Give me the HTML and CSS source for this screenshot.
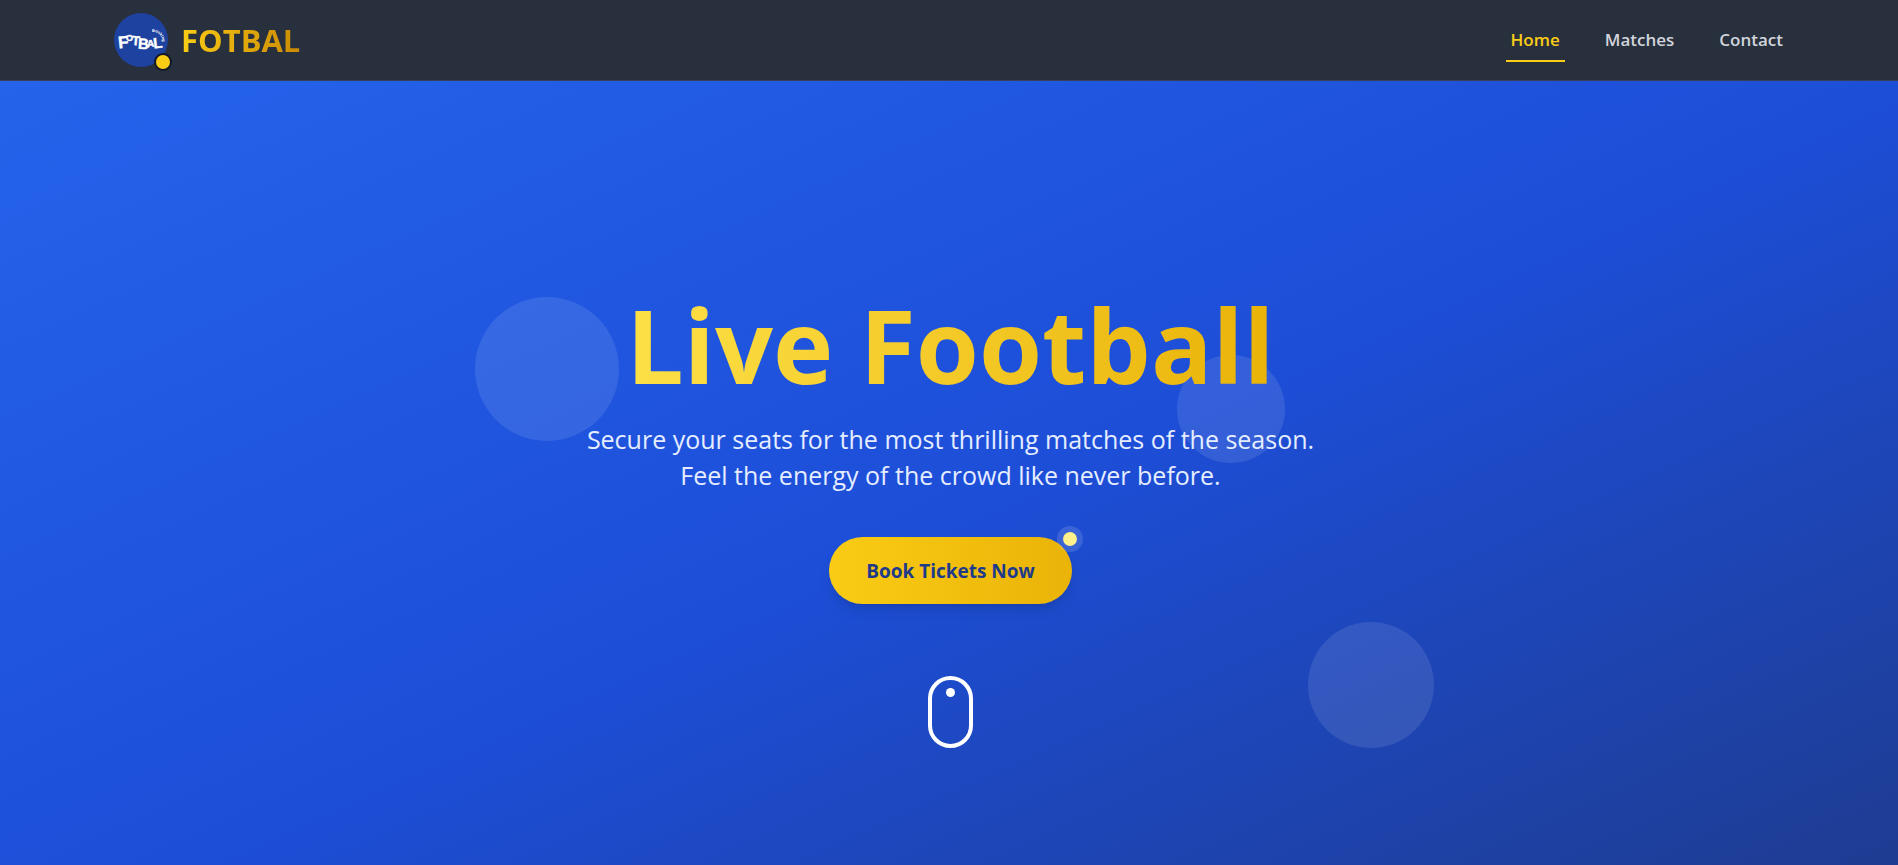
FILE: index.html
```html
<!DOCTYPE html>
<html lang="en">
<head>
<meta charset="utf-8">
<meta name="viewport" content="width=device-width, initial-scale=1">
<title>Fotbal</title>
<link rel="stylesheet" href="styles.css">
</head>
<body>
<header class="header">
  <div class="header-inner">
    <a class="brand" href="#">
      <span class="logo">
        <svg class="logo-art" viewBox="0 0 54 54" aria-hidden="true">
          <defs><path id="arc" d="M38 19 A9 9 0 0 1 48 30"/></defs>
          <circle cx="27" cy="27" r="27" fill="#1e429f"/>
          <g class="logo-letters">
            <text x="4" y="35" font-size="17" transform="rotate(-6 8 28)">F</text>
            <text x="12" y="28" font-size="9">O</text>
            <text x="18" y="32" font-size="13" transform="rotate(5 21 26)">T</text>
            <text x="24" y="36" font-size="15" transform="rotate(3 28 30)">B</text>
            <text x="33" y="34" font-size="10" transform="rotate(-4 36 30)">A</text>
            <text x="39" y="35" font-size="15" transform="rotate(-6 43 29)">L</text>
          </g>
          <text class="logo-arc" font-size="4"><textPath href="#arc">Booking</textPath></text>
        </svg>
        <span class="logo-dot"></span>
      </span>
      <span class="brand-name">FOTBAL</span>
    </a>
    <nav class="nav">
      <a class="nav-link active" href="#">Home</a>
      <a class="nav-link" href="#">Matches</a>
      <a class="nav-link" href="#">Contact</a>
    </nav>
  </div>
</header>
<main class="hero">
  <span class="bubble bubble-left"></span>
  <span class="bubble bubble-right"></span>
  <span class="bubble bubble-low"></span>
  <div class="hero-content">
    <h1 class="title">Live Football</h1>
    <p class="lead">Secure your seats for the most thrilling matches of the season.<br>Feel the energy of the crowd like never before.</p>
    <div class="cta">
      <button class="cta-button" type="button">Book Tickets Now</button>
      <span class="ping"></span>
    </div>
    <div class="mouse"><span class="mouse-dot"></span></div>
  </div>
</main>
</body>
</html>
```

FILE: styles.css
```css
* { box-sizing: border-box; }
body {
  margin: 0;
  min-height: 100vh;
  display: flex;
  flex-direction: column;
  font-family: "Segoe UI", "Open Sans", "Noto Sans", sans-serif;
}
.header {
  background: #282f3d;
  border-bottom: 1px solid #374151;
}
.header-inner {
  max-width: 1678px;
  height: 80px;
  margin: 0 auto;
  display: flex;
  align-items: center;
  justify-content: space-between;
}
.brand {
  display: flex;
  align-items: center;
  gap: 13px;
  padding-left: 4px;
  text-decoration: none;
}
.logo { position: relative; width: 54px; height: 54px; }
.logo-art { display: block; width: 54px; height: 54px; }
.logo-letters {
  fill: #fff;
  stroke: #fff;
  stroke-width: 0.4;
  font-family: "Liberation Sans Narrow", "Liberation Sans", sans-serif;
  font-weight: 700;
}
.logo-arc {
  fill: #fff;
  font-family: "Liberation Sans", sans-serif;
  font-weight: 700;
}
.logo-dot {
  position: absolute;
  right: -4px;
  bottom: -4px;
  width: 18px;
  height: 18px;
  border: 2px solid #111827;
  border-radius: 50%;
  background: #facc15;
}
.brand-name {
  font-size: 31px;
  font-weight: 700;
  line-height: 40px;
  background: linear-gradient(to right, #facc15, #ca8a04);
  -webkit-background-clip: text;
  background-clip: text;
  color: transparent;
}
.nav { display: flex; gap: 35px; }
.nav-link {
  padding: 9px 5px 7px;
  border-bottom: 2px solid transparent;
  font-size: 17px;
  font-weight: 600;
  line-height: 26px;
  color: #d1d5db;
  text-decoration: none;
}
.nav-link.active { color: #facc15; border-color: #facc15; }
.hero {
  position: relative;
  flex: 1;
  display: flex;
  align-items: center;
  justify-content: center;
  padding: 94px 0 0 3px;
  overflow: hidden;
  background: linear-gradient(to bottom right, #2563eb, #1d4ed8, #1e3a8a) 0 0 / 100% 110% no-repeat;
}
.bubble {
  position: absolute;
  border-radius: 50%;
  background: rgba(255, 255, 255, 0.1);
}
.bubble-left { left: 25%; top: 27.5%; width: 144px; height: 144px; }
.bubble-right { left: 62%; top: 35%; width: 108px; height: 108px; }
.bubble-low { left: 69%; top: 69%; width: 126px; height: 126px; margin-left: -2px; }
.hero-content {
  position: relative;
  display: flex;
  flex-direction: column;
  align-items: center;
  text-align: center;
}
.title {
  margin: 0 0 24px;
  font-size: 102px;
  font-weight: 700;
  line-height: 105px;
  background: linear-gradient(to right, #fde047, #eab308);
  -webkit-background-clip: text;
  background-clip: text;
  color: transparent;
}
.lead {
  margin: 0 0 44px;
  font-size: 25px;
  line-height: 36px;
  color: #e5edff;
}
.cta { position: relative; margin-bottom: 72px; }
.cta-button {
  display: block;
  padding: 21px 37px 19px;
  border: 0;
  border-radius: 34px;
  background: linear-gradient(to right, #facc15, #eab308);
  box-shadow: 0 9px 14px -3px rgba(0, 0, 0, 0.1), 0 4px 6px -4px rgba(0, 0, 0, 0.1);
  font: 700 19px/27px "Segoe UI", "Open Sans", "Noto Sans", sans-serif;
  color: #1e3a8a;
}
.ping {
  position: absolute;
  top: -11px;
  right: -11px;
  width: 26px;
  height: 26px;
  border: 6px solid rgba(255, 255, 255, 0.13);
  border-radius: 50%;
  background: #fef08a;
  background-clip: padding-box;
}
.mouse {
  width: 45px;
  height: 72px;
  display: flex;
  justify-content: center;
  padding-top: 8px;
  border: 4px solid #fff;
  border-radius: 23px;
}
.mouse-dot { width: 9px; height: 9px; border-radius: 50%; background: #fff; }
```
